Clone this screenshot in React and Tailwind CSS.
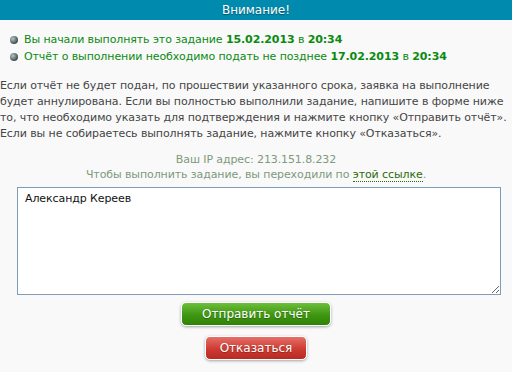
export default function App() {
  const bullets = [
    { text: "Вы начали выполнять это задание ", date: "15.02.2013", time: "20:34" },
    {
      text: "Отчёт о выполнении необходимо подать не позднее ",
      date: "17.02.2013",
      time: "20:34",
    },
  ];

  const lines = [
    "Если отчёт не будет подан, по прошествии указанного срока, заявка на выполнение",
    "будет аннулирована. Если вы полностью выполнили задание, напишите в форме ниже",
    "то, что необходимо указать для подтверждения и нажмите кнопку «Отправить отчёт».",
    "Если вы не собираетесь выполнять задание, нажмите кнопку «Отказаться».",
  ];

  return (
    <div
      className="w-[512px] h-[372px] overflow-hidden bg-[#f9f9f9] text-[11px] tracking-[-0.1px]"
      style={{ fontFamily: '"DejaVu Sans", Verdana, sans-serif' }}
    >
      {/* Header */}
      <div className="h-[20px] bg-[#008aae] flex items-center justify-center text-white text-[12px] tracking-normal [text-shadow:0_1px_1px_rgba(0,0,0,0.4)]">
        Внимание!
      </div>

      {/* Bullets */}
      <ul className="mt-[12px] pl-[10px] space-y-[1px]">
        {bullets.map((b, idx) => (
          <li key={idx} className="flex items-center gap-[6px] h-[16px] text-[#0b8a12]">
            <span className="w-[8px] h-[8px] rounded-full bg-[radial-gradient(circle_at_35%_35%,#b8c4c4,#3f5050_70%)] shrink-0"></span>
            <span className="whitespace-nowrap">
              {b.text}
              <b className="text-[11px]">{b.date}</b> в <b className="text-[11px]">{b.time}</b>
            </span>
          </li>
        ))}
      </ul>

      {/* Notice */}
      <div className="mt-[13px] leading-[16px] text-[#454545]">
        {lines.map((line, idx) => (
          <div key={idx} className="whitespace-nowrap">
            {line}
          </div>
        ))}
      </div>

      {/* IP */}
      <div className="mt-[10px] text-center leading-[15px] text-[#7d9a7d]">
        <div>Ваш IP адрес: 213.151.8.232</div>
        <div>
          Чтобы выполнить задание, вы переходили по{" "}
          <a className="text-[#2d6a0a] border-b border-dotted border-[#2d6a0a]">этой ссылке</a>.
        </div>
      </div>

      {/* Form */}
      <div className="px-[17px] mt-[5px]">
        <textarea
          defaultValue="Александр Кереев"
          spellCheck={false}
          className="w-[484px] h-[108px] block bg-white border border-[#7f9db9] px-[7px] py-[3px] text-[11px] text-[#111] outline-none"
          style={{ fontFamily: '"DejaVu Sans", Verdana, sans-serif' }}
        />
      </div>

      <div className="flex flex-col items-center gap-[10px] mt-[7px]">
        <button className="w-[150px] h-[24px] rounded-[5px] text-white text-[12px] tracking-normal bg-[linear-gradient(#6cbf3a,#3f9612_55%,#2f8208)] shadow-[0_1px_3px_rgba(0,0,0,0.35)] border border-white [text-shadow:0_1px_1px_rgba(0,0,0,0.3)]">
          Отправить отчёт
        </button>
        <button className="w-[102px] h-[24px] rounded-[5px] text-white text-[12px] tracking-normal bg-[linear-gradient(#e57068,#cd3b32_55%,#b82a22)] shadow-[0_1px_3px_rgba(0,0,0,0.35)] border border-white [text-shadow:0_1px_1px_rgba(0,0,0,0.3)]">
          Отказаться
        </button>
      </div>
    </div>
  );
}
